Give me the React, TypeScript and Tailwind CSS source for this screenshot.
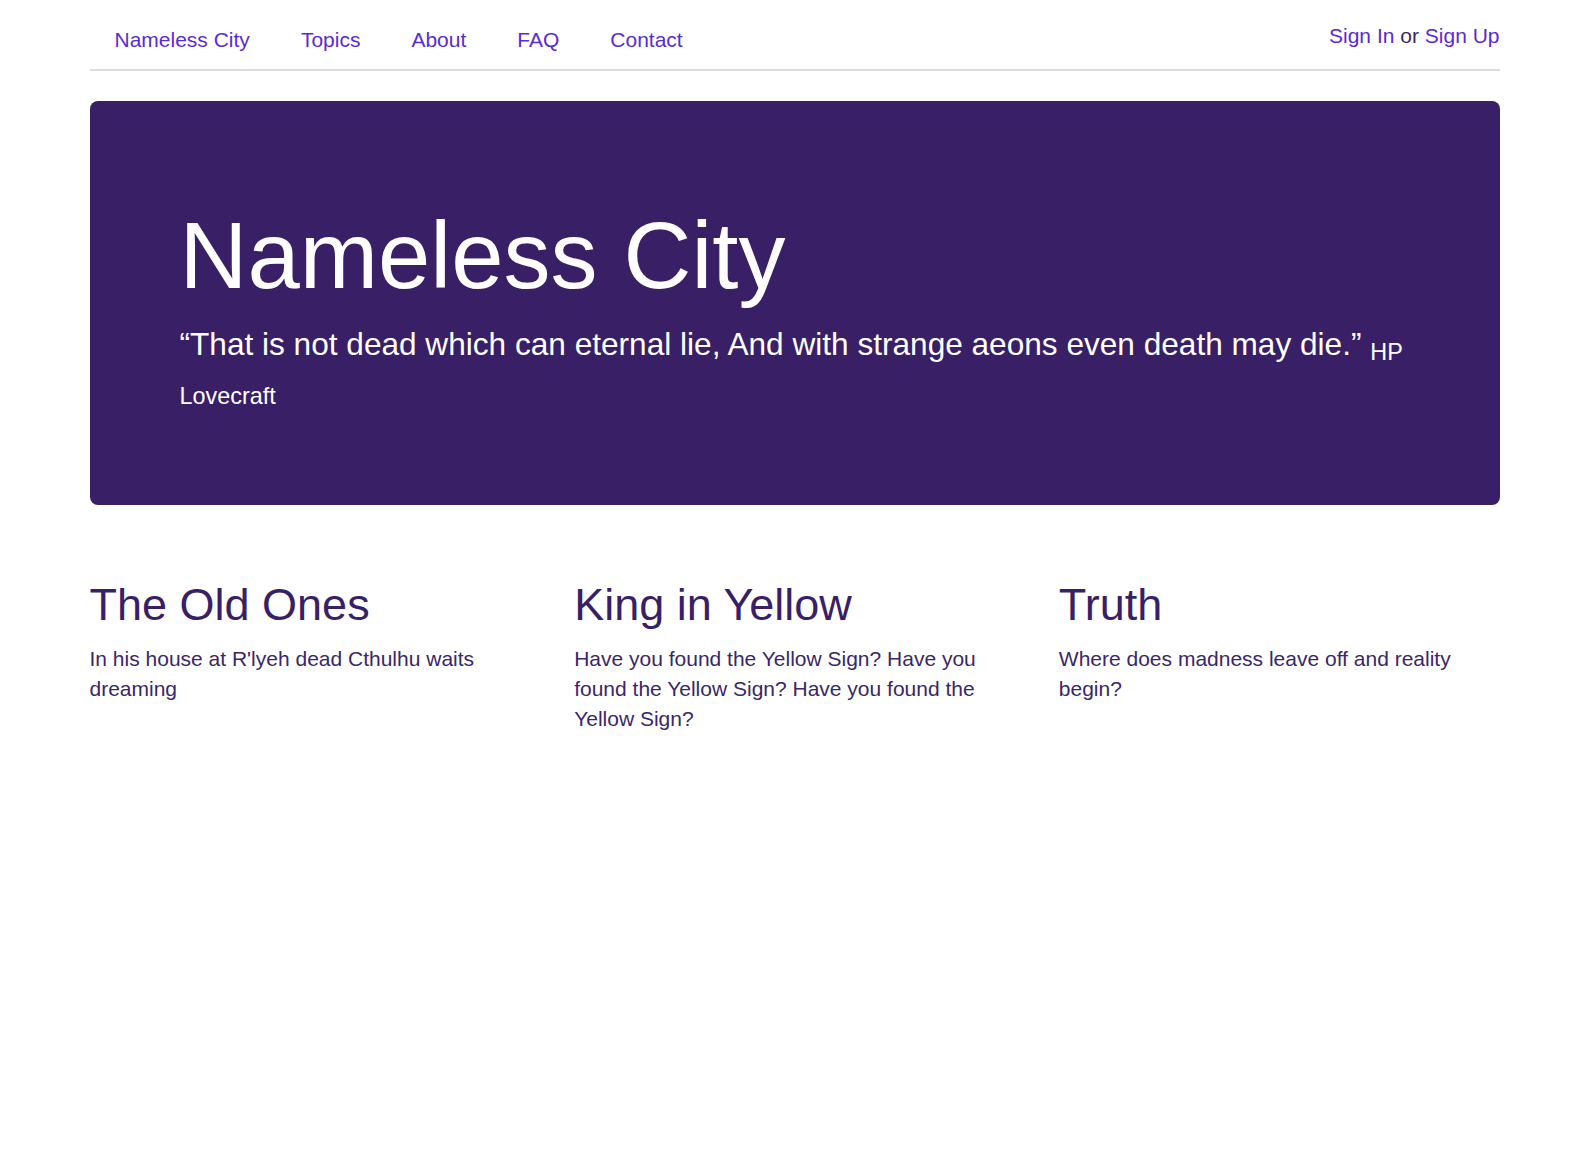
import React from "react";

const links = ["Nameless City", "Topics", "About", "FAQ", "Contact"];

const cols = [
  {
    title: "The Old Ones",
    body: "In his house at R'lyeh dead Cthulhu waits dreaming",
  },
  {
    title: "King in Yellow",
    body: "Have you found the Yellow Sign? Have you found the Yellow Sign? Have you found the Yellow Sign?",
  },
  {
    title: "Truth",
    body: "Where does madness leave off and reality begin?",
  },
];

export default function App() {
  return (
    <div className="min-h-screen bg-white font-['Liberation_Sans',Arial,sans-serif]">
      <div className="mx-auto w-[1410px]">
        <header className="flex h-[71px] justify-between border-b-2 border-[#dcdcdc]">
          <nav className="flex gap-x-[1px] pt-[28px]">
            {links.map((l) => (
              <a
                key={l}
                href="#"
                className="px-[25px] text-[21px] leading-[24px] text-[#5a2bd3]"
              >
                {l}
              </a>
            ))}
          </nav>
          <div className="pt-[24px] text-[21px] leading-[24px] text-[#3b2a66]">
            <a href="#" className="text-[#5a2bd3]">
              Sign In
            </a>{" "}
            or{" "}
            <a href="#" className="text-[#5a2bd3]">
              Sign Up
            </a>
          </div>
        </header>

        <section className="mt-[30px] rounded-lg bg-[#381f66] px-[90px] pb-[95px] pt-[99px] text-white">
          <h1 className="text-[94px] font-normal leading-[112px]">Nameless City</h1>
          <p className="mt-[10px] text-[31.6px] leading-[44px]">
            “That is not dead which can eternal lie, And with strange aeons even death may die.”{" "}
            <span className="relative top-[5px] text-[23.4px] leading-none">HP Lovecraft</span>
          </p>
        </section>

        <div className="mt-[73px] grid grid-cols-3 gap-x-[44px]">
          {cols.map((c) => (
            <div key={c.title}>
              <h2 className="mb-[12px] text-[45px] font-normal leading-[54px] text-[#381f66]">
                {c.title}
              </h2>
              <p className="text-[21px] leading-[30px] text-[#3a2769]">{c.body}</p>
            </div>
          ))}
        </div>
      </div>
    </div>
  );
}
